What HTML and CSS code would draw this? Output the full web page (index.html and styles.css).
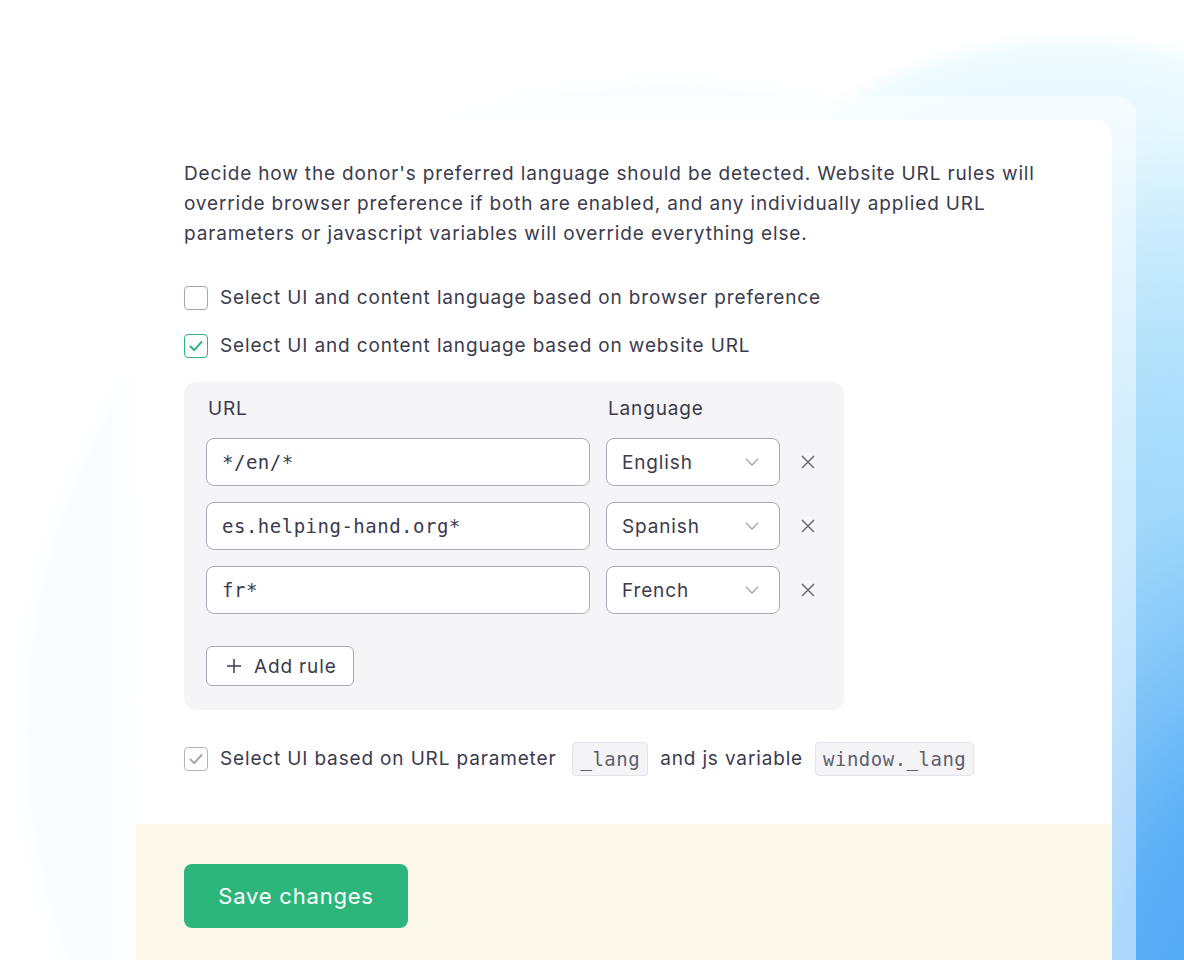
FILE: index.html
```html
<!DOCTYPE html>
<html>
<head>
<meta charset="utf-8">
<link rel="stylesheet" href="styles.css">
</head>
<body>
<div class="page">
  <div class="panel">
    <div class="card">
      <div class="card-body">
        <p class="intro">Decide how the donor's preferred language should be detected. Website URL rules will<br>override browser preference if both are enabled, and any individually applied URL<br>parameters or javascript variables will override everything else.</p>

        <label class="check-row">
          <span class="box"></span>
          <span>Select UI and content language based on browser preference</span>
        </label>
        <label class="check-row">
          <span class="box box-on">
            <svg width="16" height="16" viewBox="0 0 16 16"><polyline points="2.5,8.5 6.3,12.2 13.5,4" fill="none" stroke="#2db67c" stroke-width="1.9" stroke-linecap="round" stroke-linejoin="round"/></svg>
          </span>
          <span>Select UI and content language based on website URL</span>
        </label>

        <div class="rules">
          <div class="rules-head">
            <span class="col-url">URL</span>
            <span class="col-lang">Language</span>
          </div>
          <div class="rule">
            <div class="input mono">*/en/*</div>
            <div class="select"><span>English</span>
              <svg width="14" height="8" viewBox="0 0 14 8"><polyline points="1,1 7,7 13,1" fill="none" stroke="#a3a3b3" stroke-width="1.3"/></svg>
            </div>
            <button class="remove"><svg width="14" height="14" viewBox="0 0 14 14"><path d="M1 1L13 13M13 1L1 13" stroke="#6b6b7b" stroke-width="1.5" fill="none"/></svg></button>
          </div>
          <div class="rule">
            <div class="input mono">es.helping-hand.org*</div>
            <div class="select"><span>Spanish</span>
              <svg width="14" height="8" viewBox="0 0 14 8"><polyline points="1,1 7,7 13,1" fill="none" stroke="#a3a3b3" stroke-width="1.3"/></svg>
            </div>
            <button class="remove"><svg width="14" height="14" viewBox="0 0 14 14"><path d="M1 1L13 13M13 1L1 13" stroke="#6b6b7b" stroke-width="1.5" fill="none"/></svg></button>
          </div>
          <div class="rule">
            <div class="input mono">fr*</div>
            <div class="select"><span>French</span>
              <svg width="14" height="8" viewBox="0 0 14 8"><polyline points="1,1 7,7 13,1" fill="none" stroke="#a3a3b3" stroke-width="1.3"/></svg>
            </div>
            <button class="remove"><svg width="14" height="14" viewBox="0 0 14 14"><path d="M1 1L13 13M13 1L1 13" stroke="#6b6b7b" stroke-width="1.5" fill="none"/></svg></button>
          </div>
          <button class="add-rule">
            <svg width="16" height="16" viewBox="0 0 16 16"><path d="M8 1V15M1 8H15" stroke="#3b3b4d" stroke-width="1.5" fill="none"/></svg>
            <span>Add rule</span>
          </button>
        </div>

        <label class="check-row param-row">
          <span class="box box-muted">
            <svg width="16" height="16" viewBox="0 0 16 16"><polyline points="2.5,8.5 6.3,12.2 13.5,4" fill="none" stroke="#a3a3b8" stroke-width="1.9" stroke-linecap="round" stroke-linejoin="round"/></svg>
          </span>
          <span>Select UI based on URL parameter</span>
          <code class="chip">_lang</code>
          <span>and js variable</span>
          <code class="chip">window._lang</code>
        </label>
      </div>
      <div class="footer">
        <button class="save">Save changes</button>
      </div>
    </div>
  </div>
</div>
</body>
</html>
```

FILE: styles.css
```css
html, body {
  margin: 0;
  height: 960px;
  overflow: hidden;
}
body {
  font-family: "Inter", "Open Sans", sans-serif;
  letter-spacing: 0.85px;
  color: #3b3b4d;
  background:
    radial-gradient(ellipse 700px 950px at 1320px 1060px, #45a0f5 0%, #5cb0f6 32%, rgba(140, 206, 250, 0.6) 62%, rgba(180, 230, 252, 0) 100%),
    radial-gradient(circle 450px at 1070px 480px, #b6e5fc 0%, #d2f0fd 50%, #f0fbff 96%, rgba(255, 255, 255, 0) 100%),
    radial-gradient(circle 660px at 670px 730px, #eef8fd 0%, #f3fafe 70%, #fafdff 97%, rgba(255, 255, 255, 0) 100%),
    #ffffff;
}
.page {
  padding: 96px 0 0 112px;
}
.panel {
  width: 1024px;
  height: 864px;
  box-sizing: border-box;
  padding: 24px 24px 0;
  border-radius: 20px 20px 0 0;
  background: rgba(255, 255, 255, 0.5);
}
.card {
  background: #ffffff;
  border-radius: 16px 16px 0 0;
  height: 840px;
  overflow: hidden;
}
.card-body {
  padding: 39px 48px 48px;
}
.intro {
  margin: 0 0 37px;
  font-size: 19px;
  line-height: 30px;
}
.check-row {
  display: flex;
  align-items: center;
  gap: 12px;
  font-size: 19px;
  line-height: 24px;
  margin-bottom: 24px;
}
.box {
  width: 24px;
  height: 24px;
  box-sizing: border-box;
  border: 1.5px solid #a6a6ba;
  border-radius: 4px;
  background: #fff;
  display: flex;
  align-items: center;
  justify-content: center;
  flex: none;
}
.box-on {
  border-color: #2db67c;
}
.box-muted {
  border-color: #b3b3c5;
}
.rules {
  width: 660px;
  box-sizing: border-box;
  background: #f5f5f7;
  border-radius: 12px;
  padding: 14px 24px 24px 22px;
  margin-bottom: 32px;
}
.rules-head {
  display: flex;
  font-size: 19px;
  line-height: 26px;
  margin-bottom: 16px;
  padding-left: 2px;
}
.col-url {
  width: 400px;
}
.rule {
  display: flex;
  align-items: center;
  gap: 16px;
  margin-bottom: 16px;
}
.input, .select {
  height: 48px;
  box-sizing: border-box;
  border: 1px solid #a9a9bb;
  border-radius: 8px;
  background: #fff;
  display: flex;
  align-items: center;
  padding: 0 15px;
}
.input {
  width: 384px;
}
.mono {
  font-family: "DejaVu Sans Mono", "Liberation Mono", monospace;
  font-size: 19px;
  letter-spacing: 0.5px;
  color: #3b3b4d;
}
.select {
  width: 174px;
  justify-content: space-between;
  font-size: 19px;
  padding-right: 20px;
}
.remove {
  width: 24px;
  height: 24px;
  border: 0;
  padding: 0;
  background: transparent;
  display: flex;
  align-items: center;
  justify-content: center;
}
.add-rule {
  margin-top: 32px;
  height: 40px;
  box-sizing: border-box;
  width: 148px;
  border: 1px solid #a9a9bb;
  border-radius: 6px;
  background: #fff;
  display: flex;
  align-items: center;
  gap: 12px;
  padding: 0 0 0 19px;
  font-family: inherit;
  letter-spacing: inherit;
  font-size: 19px;
  color: #3b3b4d;
}
.param-row {
  margin-bottom: 0;
}
.param-row .chip:first-of-type {
  margin-left: 4px;
}
.chip {
  font-family: "DejaVu Sans Mono", "Liberation Mono", monospace;
  font-size: 19px;
  letter-spacing: 0.5px;
  line-height: 32px;
  color: #5e5e6e;
  background: #f4f4f6;
  border: 1px solid #e2e2e8;
  border-radius: 4px;
  padding: 0 7px;
}
.footer {
  background: #fdf9ea;
  padding: 40px 48px;
  height: 100%;
}
.save {
  width: 224px;
  height: 64px;
  border: 0;
  border-radius: 8px;
  background: #2db67c;
  color: #ffffff;
  font-family: inherit;
  letter-spacing: 0.8px;
  font-size: 22px;
}
```
